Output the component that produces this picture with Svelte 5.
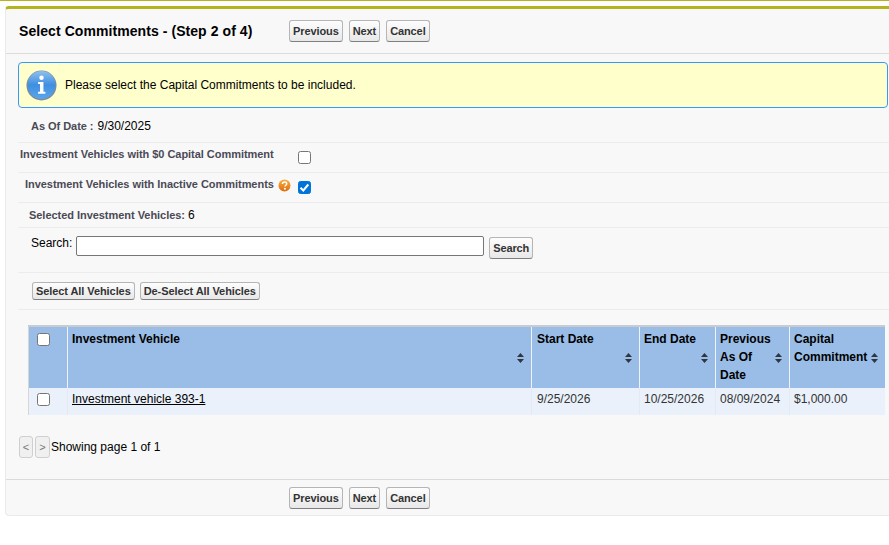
<script>
  const buttons = ["Previous", "Next", "Cancel"];
  const columns = [
    { label: "Investment Vehicle", cls: "col-name" },
    { label: "Start Date", cls: "col-start" },
    { label: "End Date", cls: "col-end" },
    { label: "Previous As Of Date", cls: "col-prev" },
    { label: "Capital Commitment", cls: "col-cap" }
  ];
</script>

{#snippet navButtons()}
  <div class="nav">
    {#each buttons as b}
      <button class="btn" type="button">{b}</button>
    {/each}
  </div>
{/snippet}

<div class="topline"></div>
<div class="panel">
  <div class="head">
    <h2>Select Commitments - (Step 2 of 4)</h2>
    {@render navButtons()}
  </div>

  <div class="body">
    <div class="message">
      <svg class="info" width="31" height="31" viewBox="0 0 32 32">
        <defs>
          <linearGradient id="infoFill" x1="0" y1="0" x2="0" y2="1">
            <stop offset="0" stop-color="#8fc0ee" />
            <stop offset="0.5" stop-color="#3f8fe0" />
            <stop offset="1" stop-color="#5ba6ec" />
          </linearGradient>
        </defs>
        <circle cx="16" cy="16" r="15.5" fill="#7d8a99" />
        <circle cx="16" cy="15.5" r="14.5" fill="url(#infoFill)" />
        <circle cx="16" cy="8" r="2.3" fill="#fff" />
        <path d="M12.5 12.500h5.500v10h2v2h-7.500v-2h2v-8h-2z" fill="#fff" />
      </svg>
      <span>Please select the Capital Commitments to be included.</span>
    </div>

    <div class="row r-date"><span class="lbl">As Of Date :</span> <span>9/30/2025</span></div>
    <div class="row r-zero">
      <span class="lbl">Investment Vehicles with $0 Capital Commitment</span>
      <input class="box" type="checkbox" />
    </div>
    <div class="row r-inactive">
      <span class="lbl">Investment Vehicles with Inactive Commitments</span>
      <svg class="help" width="13" height="13" viewBox="0 0 13 13">
        <defs>
          <linearGradient id="helpFill" x1="0" y1="0" x2="0" y2="1">
            <stop offset="0" stop-color="#f8b040" />
            <stop offset="1" stop-color="#dc6c0c" />
          </linearGradient>
        </defs>
        <circle cx="6.5" cy="6.5" r="6" fill="url(#helpFill)" />
        <path d="M4.400 5c.1-1.300 1-2 2.200-2 1.300 0 2.100.7 2.100 1.700 0 1.500-1.700 1.500-1.700 2.900" fill="none" stroke="#fff" stroke-width="1.500" />
        <circle cx="6.900" cy="9.700" r="1" fill="#fff" />
      </svg>
      <input class="box" type="checkbox" checked />
    </div>
    <div class="row r-selected"><span class="lbl">Selected Investment Vehicles:</span> <span>6</span></div>
    <div class="row r-search">
      <label for="search">Search:</label>
      <input id="search" type="text" />
      <button class="btn" type="button">Search</button>
    </div>
    <div class="row r-select">
      <button class="btn" type="button">Select All Vehicles</button>
      <button class="btn" type="button">De-Select All Vehicles</button>
    </div>

    <table>
      <thead>
        <tr>
          <th class="col-check"><input class="box" type="checkbox" /></th>
          {#each columns as c}
            <th class={c.cls}>
              <div class="th-inner">
                <span>{c.label}</span>
                <svg class="sort" width="7" height="10" viewBox="0 0 7 10">
                  <path d="M3.500 0l3.500 4h-7zM3.500 10l-3.500-4h7z" fill="#2f3640" />
                </svg>
              </div>
            </th>
          {/each}
        </tr>
      </thead>
      <tbody>
        <tr>
          <td class="col-check"><input class="box" type="checkbox" /></td>
          <td><a href="#top">Investment vehicle 393-1</a></td>
          <td class="col-start">9/25/2026</td>
          <td>10/25/2026</td>
          <td>08/09/2024</td>
          <td>$1,000.00</td>
        </tr>
      </tbody>
    </table>

    <div class="pager">
      <button class="page" type="button" disabled>&lt;</button>
      <button class="page" type="button" disabled>&gt;</button>
      <span>Showing page 1 of 1</span>
    </div>
  </div>

  <div class="foot">
    {@render navButtons()}
  </div>
</div>

<style>
  :global(body) {
    background: #fff;
    overflow: hidden;
    font-family: "Liberation Sans", Arial, sans-serif;
    font-size: 12px;
    color: #000;
  }

  .topline { height: 1px; background: #b5b31e; }

  .panel {
    margin: 5px 0 0 5px;
    width: 900px;
    box-sizing: border-box;
    background: #f8f8f8;
    border: 1px solid #eaeaea;
    border-top: 3px solid #b5b31e;
    border-radius: 4px;
  }

  .head {
    display: flex;
    align-items: center;
    height: 44px;
    border-bottom: 1px solid #dbdbdb;
  }

  h2 {
    margin: 0 0 0 13px;
    width: 270px;
    font-size: 14px;
    letter-spacing: 0.07px;
    font-weight: bold;
    white-space: nowrap;
  }

  .nav { display: flex; gap: 6px; }

  .btn {
    height: 22px;
    padding: 0 3px;
    border: 1px solid #b5b5b5;
    border-bottom-color: #7f7f7f;
    border-radius: 3px;
    background: linear-gradient(#fdfdfd, #e8e8e8);
    font: bold 11px "Liberation Sans", Arial, sans-serif;
    letter-spacing: -0.1px;
    color: #333;
  }

  .body { padding: 8px 0 0 12px; }

  .message {
    display: flex;
    align-items: center;
    gap: 8px;
    width: 870px;
    height: 46px;
    box-sizing: border-box;
    padding-left: 7px;
    background: #ffffcc;
    border: 1px solid #3399ff;
    border-radius: 4px;
  }

  .row {
    display: flex;
    align-items: center;
    box-sizing: border-box;
    border-bottom: 1px solid #ececec;
  }

  .lbl { color: #4a4a56; font-weight: bold; font-size: 11px; letter-spacing: -0.04px; }

  .r-date { height: 35px; padding: 1px 0 0 13px; gap: 4px; }
  .r-zero { height: 30px; padding: 0 0 8px 2px; }
  .r-zero .box { margin: 8px 0 0 24px; }
  .r-inactive { height: 30px; padding: 0 0 8px 7px; }
  .r-inactive .help { margin: 4px 0 0 4px; }
  .r-inactive .box { margin: 8px 0 0 7px; }
  .r-selected { height: 25px; padding: 0 0 1px 11px; gap: 3px; }
  .r-search { height: 45px; padding: 0 0 5px 13px; align-items: flex-start; }
  .r-search label { margin-top: 8px; }
  .r-search input {
    width: 408px;
    height: 20px;
    box-sizing: border-box;
    margin: 8px 5px 0 4px;
    padding: 0 2px;
    border: 1px solid #767676;
    border-radius: 2px;
    background: #fff;
  }
  .r-search .btn { margin-top: 9px; letter-spacing: -0.15px; }
  .r-select { height: 37px; padding: 0 0 0 14px; gap: 5px; }
  .r-select .btn { height: 18px; letter-spacing: -0.08px; }

  .box {
    appearance: none;
    width: 13px;
    height: 13px;
    margin: 0;
    box-sizing: border-box;
    border: 1px solid #767676;
    border-radius: 2.5px;
    background: #fff;
  }
  .box:checked {
    border-color: #0075d9;
    background: #0075d9 url("data:image/svg+xml,%3Csvg xmlns='http://www.w3.org/2000/svg' viewBox='0 0 13 13'%3E%3Cpath d='M2.500 6.800l2.800 2.700 5-6' fill='none' stroke='%23fff' stroke-width='2'/%3E%3C/svg%3E") center / 13px 13px no-repeat;
  }

  table {
    margin: 15px 0 0 10px;
    width: 856px;
    table-layout: fixed;
    border-collapse: collapse;
    border-left: 1px solid #d6d6d6;
  }

  th, td { padding: 0; box-sizing: border-box; text-align: left; vertical-align: top; }

  th {
    height: 62px;
    padding: 3px 6px 3px 4px;
    background: #99bde6;
    border-top: 2px solid #c8ccd0;
    border-right: 1px solid #eef3f9;
    font-weight: bold;
    line-height: 18px;
  }
  th:last-child { border-right: 0; }

  .th-inner { position: relative; height: 54px; }
  .th-inner span { display: block; padding-right: 11px; }
  .sort { position: absolute; right: 1px; top: 23px; }
  .col-prev span { padding-right: 21px; }
  .col-cap span { padding-right: 0; }
  .col-cap .sort { right: 1px; }

  th.col-start, td.col-start { padding-left: 5px; }

  td {
    height: 27px;
    padding: 4px 4px 0;
    background: #eaf1fa;
    border-right: 1px solid #e4eaf2;
    line-height: 14px;
    color: #333;
  }
  td:last-child { border-right: 0; }
  td a { color: #000; }

  .col-check { width: 39px; }
  th.col-check { padding: 6px 0 0 8px; }
  td.col-check { padding: 5px 0 0 8px; }
  .col-name { width: 464px; }
  .col-start { width: 108px; }
  .col-end { width: 76px; }
  .col-prev { width: 74px; }
  .col-cap { width: 95px; }

  .pager { display: flex; align-items: center; gap: 2px; margin: 21px 0 0 1px; height: 22px; }
  .page {
    width: 14px;
    height: 22px;
    padding: 0;
    border: 1px solid #cfcfcf;
    border-radius: 3px;
    background: #f0f0f0;
    color: #777;
    font: 11px "Liberation Sans", Arial, sans-serif;
  }
  .page + .page { width: 15px; margin-right: -1px; }

  .foot {
    height: 36px;
    margin-top: 21px;
    padding: 7px 0 0 283px;
    box-sizing: border-box;
    border-top: 1px solid #dbdbdb;
  }
</style>
